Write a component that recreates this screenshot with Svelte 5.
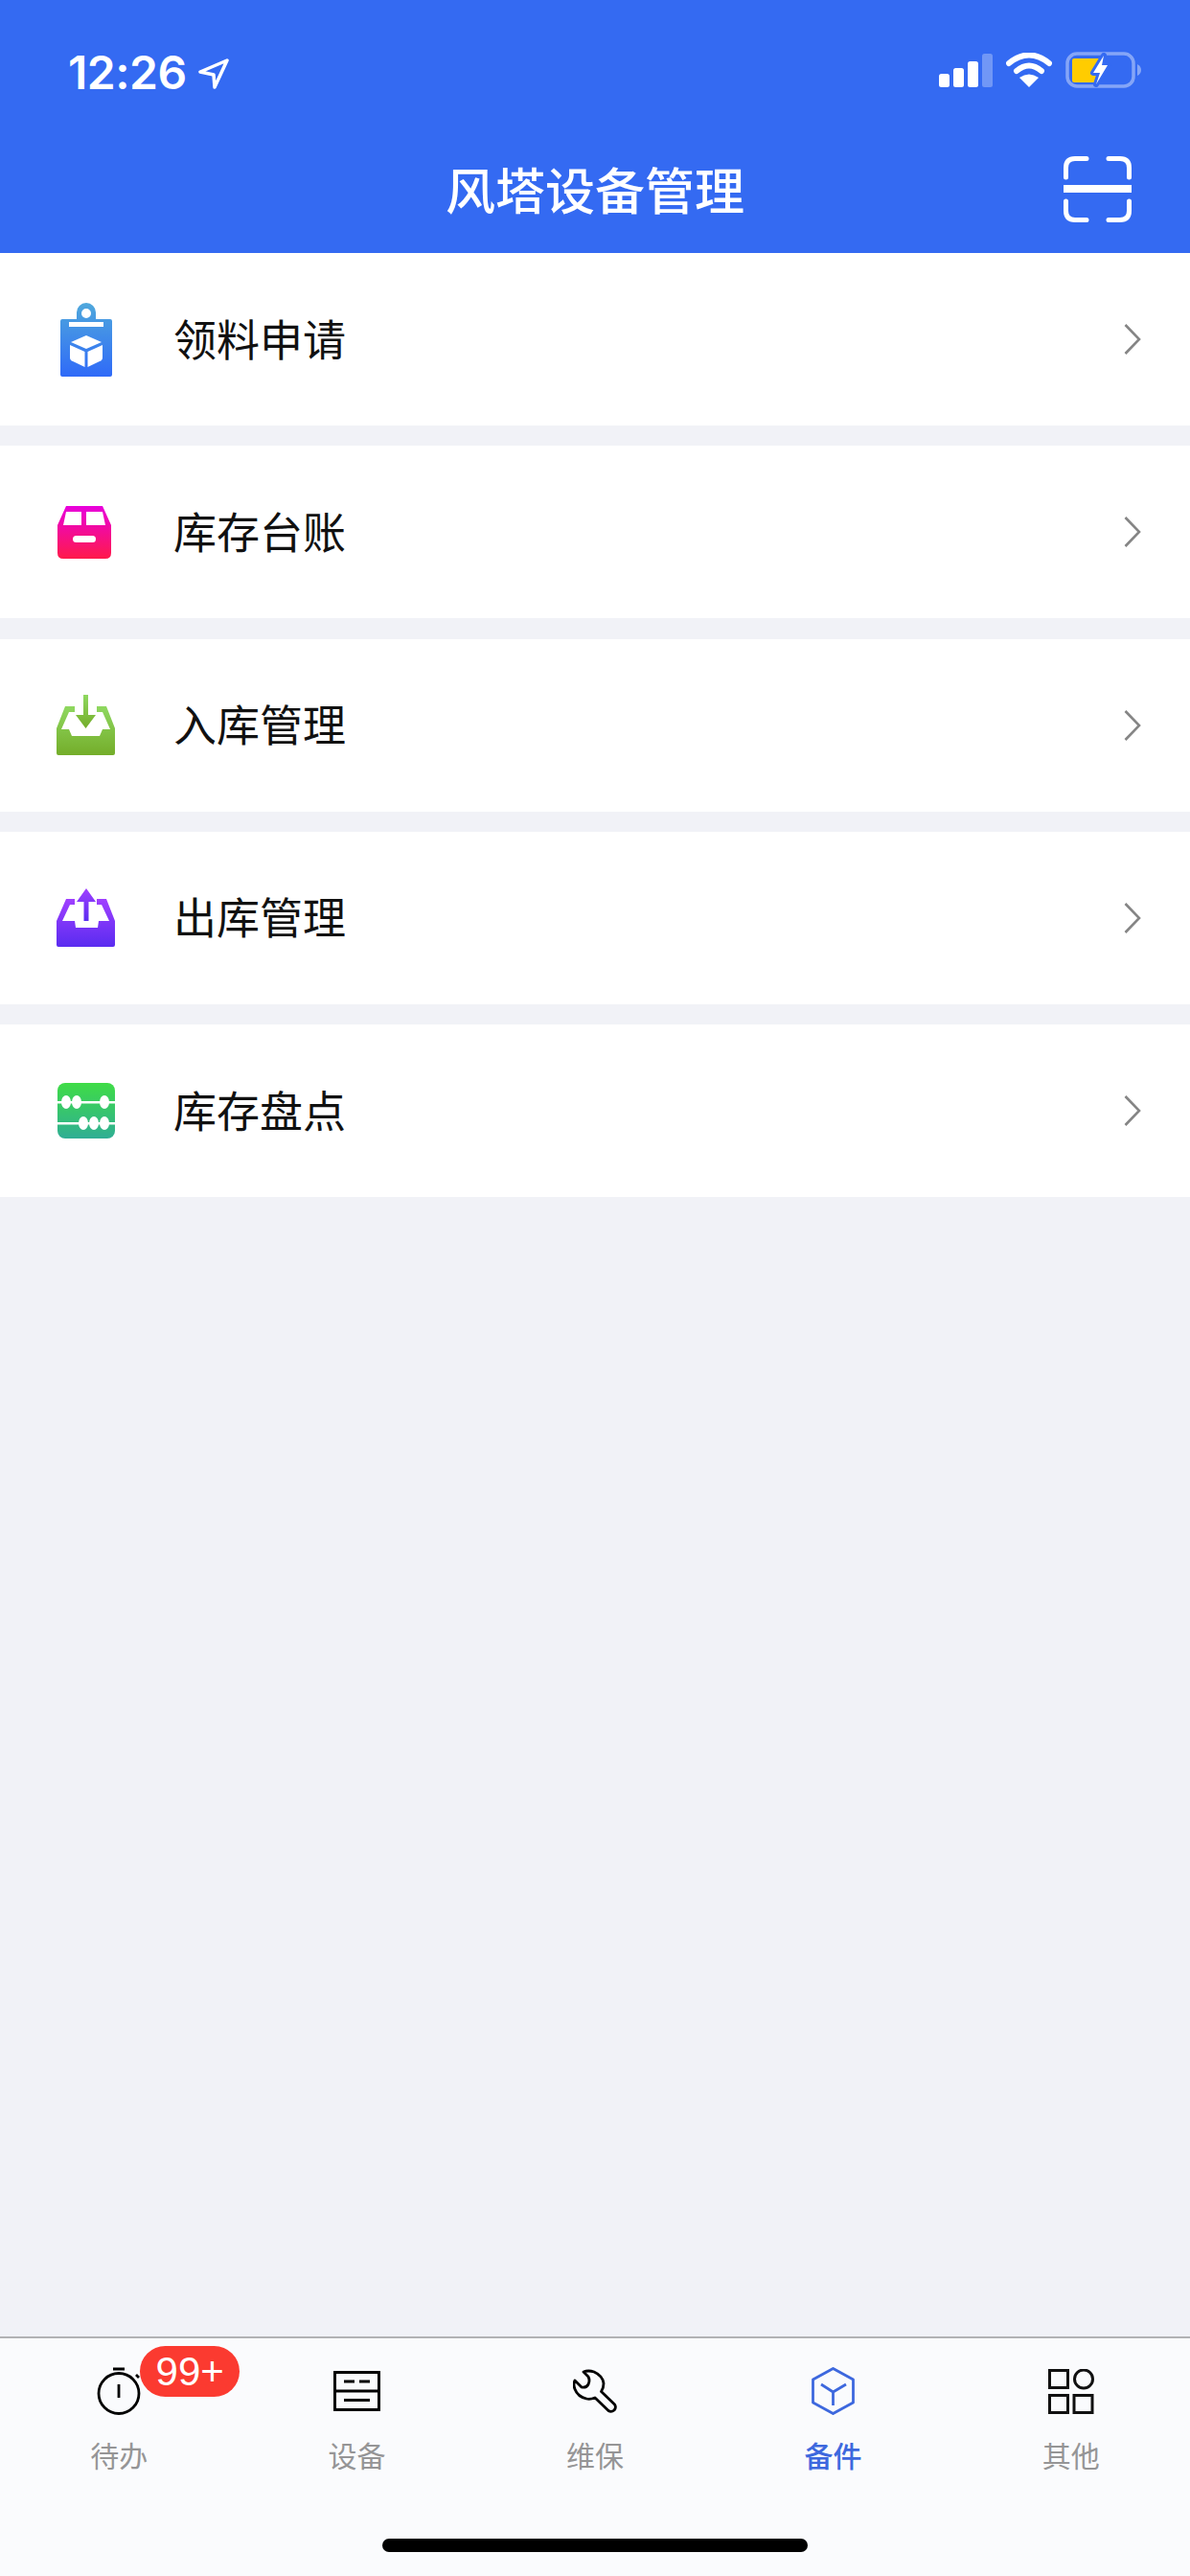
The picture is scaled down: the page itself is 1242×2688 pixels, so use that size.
<script lang="ts">
	const rows = [
		{ label: '领料申请', icon: 'clip' },
		{ label: '库存台账', icon: 'box' },
		{ label: '入库管理', icon: 'in' },
		{ label: '出库管理', icon: 'out' },
		{ label: '库存盘点', icon: 'abacus' }
	];
	const tabs = [
		{ label: '待办', icon: 'timer' },
		{ label: '设备', icon: 'device' },
		{ label: '维保', icon: 'wrench' },
		{ label: '备件', icon: 'cube', active: true },
		{ label: '其他', icon: 'grid' }
	];
	const bolt = 'M40 4 L29 22 H36 L32 34 L44 14 H38 Z';
</script>

<div class="page">
	<header class="top">
		<div class="status">
			<div class="clock">
				<span>12:26</span>
				<svg class="arrow" viewBox="0 0 32 32" width="32" height="32">
					<path d="M30 2 L2 14 L16 17 L17 30 Z" fill="none" stroke="#fff" stroke-width="3.500" stroke-linejoin="round"/>
				</svg>
			</div>
			<div class="indicators">
				<svg viewBox="0 0 56 35" width="56" height="35">
					<rect x="0" y="21" width="11" height="14" rx="2.5" fill="#fff"/>
					<rect x="15" y="15" width="11" height="20" rx="2.5" fill="#fff"/>
					<rect x="30" y="8" width="11" height="27" rx="2.5" fill="#fff"/>
					<rect x="45" y="0" width="11" height="35" rx="2.5" fill="#fff" opacity="0.3"/>
				</svg>
				<svg viewBox="0 0 48 36" width="48" height="36">
					<path d="M3 11 Q24 -6 45 11" fill="none" stroke="#fff" stroke-width="6" stroke-linecap="round"/>
					<path d="M11 19 Q24 8 37 19" fill="none" stroke="#fff" stroke-width="6" stroke-linecap="round"/>
					<path d="M24 36 L14 26 Q24 19 34 26 Z" fill="#fff"/>
				</svg>
				<svg viewBox="0 0 80 38" width="80" height="38">
					<rect x="2" y="2" width="69" height="34" rx="10" fill="none" stroke="#fff" stroke-width="3.500" opacity="0.4"/>
					<path d="M7 9 Q7 7 9 7 H35 V32 H9 Q7 32 7 30 Z" fill="#ffcc00"/>
					<path d="M75 13 Q79 15 79 19 Q79 23 75 25 Z" fill="#fff" opacity="0.4"/>
					<path d={bolt} fill="#346af2" stroke="#346af2" stroke-width="6" stroke-linejoin="round"/>
					<path d={bolt} fill="#fff"/>
				</svg>
			</div>
		</div>
		<div class="nav">
			<h1>风塔设备管理</h1>
			<svg class="scan" viewBox="0 0 71 69" width="71" height="69">
				<g fill="none" stroke="#fff" stroke-width="5" stroke-linecap="round">
					<path d="M2.500 22 V12 Q2.500 2.500 12 2.500 H24"/>
					<path d="M47 2.500 H59 Q68.500 2.500 68.500 12 V22"/>
					<path d="M2.500 47 V57 Q2.500 66.500 12 66.500 H24"/>
					<path d="M47 66.500 H59 Q68.500 66.500 68.500 57 V47"/>
				</g>
				<rect x="0" y="30" width="71" height="8" fill="#fff"/>
			</svg>
		</div>
	</header>

	<main class="list">
		{#each rows as row}
			<div class="row">
				<div class="icon">
					{#if row.icon === 'clip'}
						<svg viewBox="0 0 54 77" width="54" height="77">
							<defs>
								<linearGradient id="gClip" x1="0" y1="0" x2="0" y2="1">
									<stop offset="0" stop-color="#4fa8dc"/>
									<stop offset="1" stop-color="#2f6af8"/>
								</linearGradient>
							</defs>
							<path fill="url(#gClip)" fill-rule="evenodd" d="M17 17 V10 A10 10 0 0 1 37 10 V17 H52 Q54 17 54 19 V75 Q54 77 52 77 H2 Q0 77 0 75 V19 Q0 17 2 17 Z M27 6 A5 5 0 1 0 27 16 A5 5 0 1 0 27 6 Z"/>
							<rect x="9" y="20" width="36" height="5" fill="#fff"/>
							<path d="M27 34 L43 41 L27 48 L11 41 Z" fill="#fff"/>
							<path d="M10 44 L25.500 51 V67 L13 61 Q10 60 10 57 Z" fill="#fff"/>
							<path d="M44 44 L28.500 51 V67 L41 61 Q44 60 44 57 Z" fill="#fff"/>
						</svg>
					{:else if row.icon === 'box'}
						<svg viewBox="0 0 60 55" width="60" height="55">
							<defs>
								<linearGradient id="gBox" x1="0" y1="0" x2="0" y2="1">
									<stop offset="0" stop-color="#e800dc"/>
									<stop offset="1" stop-color="#ff1a4a"/>
								</linearGradient>
							</defs>
							<path fill="url(#gBox)" fill-rule="evenodd" d="M9 0 H47 L56 20 V49 Q56 55 50 55 H6 Q0 55 0 49 V20 Z M9 6 L6 20 H25 V6 Z M30 6 V20 H50 L47 6 Z"/>
							<rect x="16" y="31" width="24" height="7" rx="3.500" fill="#fff"/>
						</svg>
					{:else if row.icon === 'in'}
						<svg viewBox="0 0 61 63" width="61" height="63">
							<defs>
								<linearGradient id="gIn" x1="0" y1="0" x2="0" y2="1">
									<stop offset="0" stop-color="#8fd860"/>
									<stop offset="1" stop-color="#74ad2a"/>
								</linearGradient>
							</defs>
							<path fill="url(#gIn)" d="M9 12 H19 V18 H13 L5 36 H13 L16 43 H45 L48 36 H56 L48 18 H42 V12 H52 L61 35 V61 Q61 63 59 63 H2 Q0 63 0 61 V35 Z"/>
							<path fill="url(#gIn)" d="M28 0 H33 V21 H41 L30.500 35 L20 21 H28 Z"/>
						</svg>
					{:else if row.icon === 'out'}
						<svg viewBox="0 0 61 61" width="61" height="61">
							<defs>
								<linearGradient id="gOut" x1="0" y1="0" x2="0" y2="1">
									<stop offset="0" stop-color="#a040ff"/>
									<stop offset="1" stop-color="#5a2cf0"/>
								</linearGradient>
							</defs>
							<path fill="url(#gOut)" d="M10 11 H19 V17 H14 L6 34 H19 L20 41 H43 L44 34 H55 L47 17 H42 V11 H52 L61 34 V59 Q61 61 59 61 H2 Q0 61 0 59 V34 Z"/>
							<path fill="url(#gOut)" d="M31 0 L41 14 H33.500 V34 H28.500 V14 H21 Z"/>
						</svg>
					{:else}
						<svg viewBox="0 0 60 58" width="60" height="58">
							<defs>
								<linearGradient id="gAba" x1="0" y1="0" x2="0" y2="1">
									<stop offset="0" stop-color="#3fdc46"/>
									<stop offset="1" stop-color="#2fae94"/>
								</linearGradient>
							</defs>
							<rect width="60" height="58" rx="8" fill="url(#gAba)"/>
							<rect x="0" y="19" width="60" height="2.500" fill="#fff"/>
							<rect x="0" y="41" width="60" height="2.500" fill="#fff"/>
							<ellipse cx="9" cy="20" rx="5" ry="7" fill="#fff"/>
							<ellipse cx="20" cy="20" rx="5" ry="7" fill="#fff"/>
							<ellipse cx="49" cy="20" rx="5" ry="7" fill="#fff"/>
							<ellipse cx="27" cy="42" rx="5" ry="7" fill="#fff"/>
							<ellipse cx="38" cy="42" rx="5" ry="7" fill="#fff"/>
							<ellipse cx="49" cy="42" rx="5" ry="7" fill="#fff"/>
						</svg>
					{/if}
				</div>
				<span class="name">{row.label}</span>
				<svg class="chevron" viewBox="0 0 20 36" width="20" height="36">
					<path d="M2.500 3 L17 18 L2.500 33" fill="none" stroke="#858585" stroke-width="2.600"/>
				</svg>
			</div>
		{/each}
	</main>

	<nav class="tabs">
		{#each tabs as tab}
			<div class="tab" class:active={tab.active}>
				<div class="tab-icon">
					{#if tab.icon === 'timer'}
						<svg viewBox="0 0 46 50" width="46" height="50">
							<g fill="none" stroke="#000" stroke-width="2.800">
								<circle cx="23" cy="27.500" r="21"/>
								<path d="M17 2 H29 M23 18 V32 M41 8 L44 11"/>
							</g>
						</svg>
						<span class="badge">99+</span>
					{:else if tab.icon === 'device'}
						<svg viewBox="0 0 49 42" width="49" height="42">
							<g fill="none" stroke="#000" stroke-width="3">
								<rect x="1.500" y="1.500" width="46" height="39"/>
								<path d="M1.500 21 H47.500 M11 11 H22 M27 11 H38 M11 30.500 H38"/>
							</g>
						</svg>
					{:else if tab.icon === 'wrench'}
						<svg viewBox="0 0 46 46" width="46" height="46">
							<path fill="none" stroke="#000" stroke-width="2.800" stroke-linejoin="round" d="M11 3 Q16 1 22 3 Q31 7 32 15 Q32 20 29.500 23.500 L43.500 37 Q45.500 40 43 43 Q40 45.500 37 43.500 L23 30 Q18 32 14 31 Q5 29 2 21 Q0 16 2 12 L9 19 Q14 20 16 16 Q18 12 16 8 Z"/>
						</svg>
					{:else if tab.icon === 'cube'}
						<svg viewBox="0 0 45 50" width="45" height="50">
							<g fill="none" stroke="#3d68de" stroke-width="2.800" stroke-linejoin="round">
								<path d="M22.500 1.500 L43.500 13 V37 L22.500 48.500 L1.500 37 V13 Z"/>
								<path d="M10 18 L22.500 26 L36 18 M22.500 26 V40"/>
							</g>
						</svg>
					{:else}
						<svg viewBox="0 0 48 47" width="48" height="47">
							<g fill="none" stroke="#111" stroke-width="3">
								<rect x="1.500" y="1.500" width="19" height="18"/>
								<circle cx="37" cy="10.500" r="9.500"/>
								<rect x="1.500" y="27.500" width="19" height="18"/>
								<rect x="27" y="27.500" width="19" height="18"/>
							</g>
						</svg>
					{/if}
				</div>
				<span class="tab-label">{tab.label}</span>
			</div>
		{/each}
		<div class="home"></div>
	</nav>
</div>

<style>
	:global(body) {
		margin: 0;
	}

	.page {
		width: 1242px;
		height: 2688px;
		display: flex;
		flex-direction: column;
		background: #f1f2f7;
		font-family: "Noto Sans CJK SC", sans-serif;
	}

	.top {
		height: 264px;
		background: #346af2;
		color: #fff;
		display: flex;
		flex-direction: column;
	}

	.status {
		height: 146px;
		padding: 54px 50px 0 71px;
		box-sizing: border-box;
		display: flex;
		justify-content: space-between;
		align-items: flex-start;
	}

	.clock {
		display: flex;
		align-items: center;
		gap: 12px;
		font-family: Inter, "Liberation Sans", sans-serif;
		font-size: 48px;
		font-weight: 600;
		line-height: 44px;
		letter-spacing: -0.5px;
	}

	.arrow {
		margin-top: 2px;
	}

	.indicators {
		display: flex;
		align-items: center;
		gap: 14px;
	}

	.nav {
		flex: 1;
		position: relative;
		display: flex;
		justify-content: center;
	}

	h1 {
		margin: 0;
		font-size: 52px;
		font-weight: 500;
		line-height: 102px;
	}

	.scan {
		position: absolute;
		right: 61px;
		top: 17px;
	}

	.list {
		flex: 1;
		display: flex;
		flex-direction: column;
		gap: 21.300px;
	}

	.row {
		height: 180px;
		background: #fff;
		display: flex;
		align-items: center;
	}

	.icon {
		width: 61px;
		margin: 0 61px 0 59px;
		flex-shrink: 0;
		display: flex;
		justify-content: center;
		align-items: center;
	}

	.icon svg {
		display: block;
	}

	.name {
		flex: 1;
		font-size: 45px;
		line-height: 60px;
		margin-top: -3px;
		color: #111;
	}

	.chevron {
		margin-right: 50px;
	}

	.tabs {
		height: 250px;
		box-sizing: border-box;
		border-top: 2px solid #b2b2b4;
		background: #fafbfd;
		display: grid;
		grid-template-columns: repeat(5, 1fr);
		position: relative;
	}

	.tab {
		display: flex;
		flex-direction: column;
		align-items: center;
		color: #959596;
		padding-top: 30px;
	}

	.tab.active {
		color: #3d68de;
	}

	.tab-icon {
		height: 50px;
		display: flex;
		align-items: center;
		position: relative;
	}

	.tab-icon svg {
		display: block;
	}

	.tab-label {
		font-size: 30px;
		line-height: 40px;
		margin-top: 21px;
	}

	.tab.active .tab-label {
		font-weight: 500;
	}

	.badge {
		position: absolute;
		left: 45px;
		top: -22px;
		width: 104px;
		height: 53px;
		border-radius: 27px;
		background: #fb3a30;
		color: #fff;
		font-family: "Liberation Sans", sans-serif;
		font-size: 42px;
		line-height: 53px;
		text-align: center;
	}

	.home {
		position: absolute;
		left: 399px;
		top: 209px;
		width: 444px;
		height: 14px;
		border-radius: 7px;
		background: #000;
	}
</style>
